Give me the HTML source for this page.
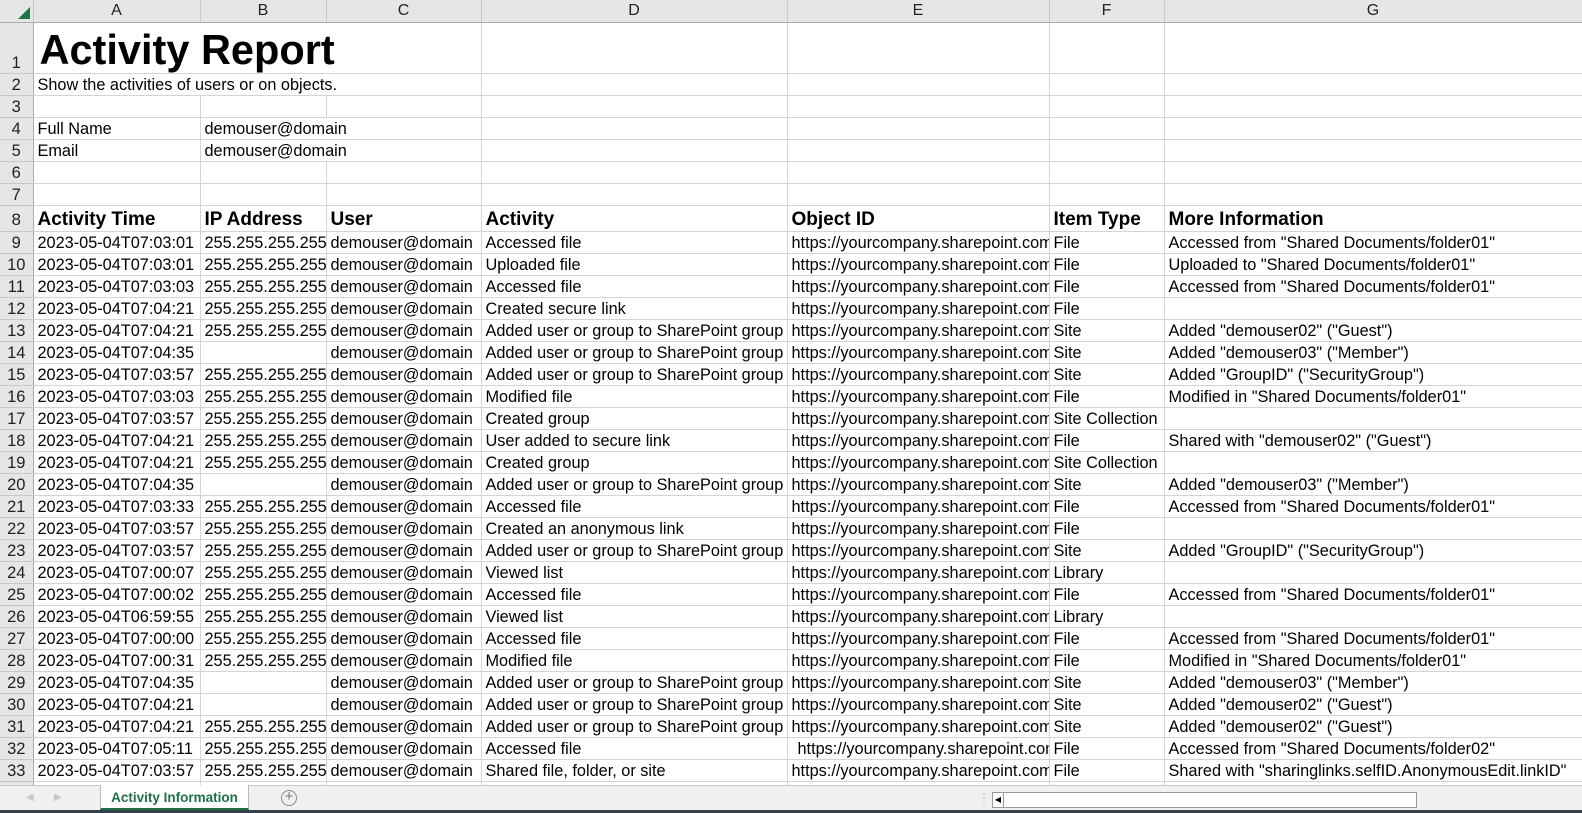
<!DOCTYPE html>
<html><head><meta charset="utf-8"><style>
*{margin:0;padding:0;box-sizing:border-box}
body{width:1582px;height:813px;overflow:hidden;background:#fff;font-family:"Liberation Sans",Arial,sans-serif;position:relative}
table{border-collapse:collapse;table-layout:fixed;position:absolute;left:0;top:0;width:1582px}
td{border-right:1px solid #d4d4d4;border-bottom:1px solid #d4d4d4;font-size:16.3px;white-space:nowrap;overflow:hidden;padding:0 0 0 4px;vertical-align:bottom;height:22px;line-height:19px;color:#000}
td.ov{overflow:visible}
tr.h td{background:#e6e6e6;text-align:center;height:22px;border-bottom:1px solid #ababab;border-right:1px solid #c8c8c8;font-size:16px;color:#222;vertical-align:middle;padding:0}
td.rn{background:#e6e6e6;text-align:center;padding:0;border-right:1px solid #ababab;border-bottom:1px solid #c8c8c8;color:#222;font-size:16.5px}
tr.t td{height:51px}
tr.t td.big{font-size:41.5px;font-weight:bold;line-height:46px;padding-left:6px}
tr.b td{font-size:19px;font-weight:bold;line-height:22px;height:26px}
.bar{position:absolute;left:0;top:785px;width:1582px;height:25px;background:#f0f0f0;border-top:1px solid #c8c8c8}
.bot{position:absolute;left:0;top:810px;width:1582px;height:3px;background:#33404a}
.tab{position:absolute;left:100px;top:785px;width:149px;height:25px;background:#fff;border-left:1px solid #bbb;border-right:1px solid #bbb;border-bottom:2px solid #1e7145;color:#1e7145;font-weight:bold;font-size:13.5px;text-align:center;line-height:25px}
</style></head><body>
<table>
<colgroup><col style="width:33px"><col style="width:167px"><col style="width:126px"><col style="width:155px"><col style="width:306px"><col style="width:262px"><col style="width:115px"><col style="width:418px"></colgroup>
<tr class="h"><td style="position:relative"><div style="position:absolute;right:3px;bottom:3px;width:0;height:0;border-left:12px solid transparent;border-bottom:12px solid #217346"></div></td><td>A</td><td>B</td><td>C</td><td>D</td><td>E</td><td>F</td><td>G</td></tr>
<tr class="t"><td class="rn">1</td><td class="ov big" style="border-right:none">Activity Report</td><td style="border-right:none"></td><td></td><td></td><td></td><td></td><td></td></tr>
<tr><td class="rn">2</td><td class="ov" style="border-right:none">Show the activities of users or on objects.</td><td style="border-right:none"></td><td></td><td></td><td></td><td></td><td></td></tr>
<tr><td class="rn">3</td><td></td><td></td><td></td><td></td><td></td><td></td><td></td></tr>
<tr><td class="rn">4</td><td>Full Name</td><td class="ov" style="border-right:none">demouser@domain</td><td></td><td></td><td></td><td></td><td></td></tr>
<tr><td class="rn">5</td><td>Email</td><td class="ov" style="border-right:none">demouser@domain</td><td></td><td></td><td></td><td></td><td></td></tr>
<tr><td class="rn">6</td><td></td><td></td><td></td><td></td><td></td><td></td><td></td></tr>
<tr><td class="rn">7</td><td></td><td></td><td></td><td></td><td></td><td></td><td></td></tr>
<tr class="b"><td class="rn" style="font-weight:normal;font-size:17px">8</td><td>Activity Time</td><td>IP Address</td><td>User</td><td>Activity</td><td>Object ID</td><td>Item Type</td><td>More Information</td></tr>
<tr><td class="rn">9</td><td>2023-05-04T07:03:01</td><td>255.255.255.255</td><td>demouser@domain</td><td>Accessed file</td><td>https://yourcompany.sharepoint.com</td><td>File</td><td>Accessed from "Shared Documents/folder01"</td></tr>
<tr><td class="rn">10</td><td>2023-05-04T07:03:01</td><td>255.255.255.255</td><td>demouser@domain</td><td>Uploaded file</td><td>https://yourcompany.sharepoint.com</td><td>File</td><td>Uploaded to "Shared Documents/folder01"</td></tr>
<tr><td class="rn">11</td><td>2023-05-04T07:03:03</td><td>255.255.255.255</td><td>demouser@domain</td><td>Accessed file</td><td>https://yourcompany.sharepoint.com</td><td>File</td><td>Accessed from "Shared Documents/folder01"</td></tr>
<tr><td class="rn">12</td><td>2023-05-04T07:04:21</td><td>255.255.255.255</td><td>demouser@domain</td><td>Created secure link</td><td>https://yourcompany.sharepoint.com</td><td>File</td><td></td></tr>
<tr><td class="rn">13</td><td>2023-05-04T07:04:21</td><td>255.255.255.255</td><td>demouser@domain</td><td>Added user or group to SharePoint group</td><td>https://yourcompany.sharepoint.com</td><td>Site</td><td>Added "demouser02" ("Guest")</td></tr>
<tr><td class="rn">14</td><td>2023-05-04T07:04:35</td><td></td><td>demouser@domain</td><td>Added user or group to SharePoint group</td><td>https://yourcompany.sharepoint.com</td><td>Site</td><td>Added "demouser03" ("Member")</td></tr>
<tr><td class="rn">15</td><td>2023-05-04T07:03:57</td><td>255.255.255.255</td><td>demouser@domain</td><td>Added user or group to SharePoint group</td><td>https://yourcompany.sharepoint.com</td><td>Site</td><td>Added "GroupID" ("SecurityGroup")</td></tr>
<tr><td class="rn">16</td><td>2023-05-04T07:03:03</td><td>255.255.255.255</td><td>demouser@domain</td><td>Modified file</td><td>https://yourcompany.sharepoint.com</td><td>File</td><td>Modified in "Shared Documents/folder01"</td></tr>
<tr><td class="rn">17</td><td>2023-05-04T07:03:57</td><td>255.255.255.255</td><td>demouser@domain</td><td>Created group</td><td>https://yourcompany.sharepoint.com</td><td>Site Collection</td><td></td></tr>
<tr><td class="rn">18</td><td>2023-05-04T07:04:21</td><td>255.255.255.255</td><td>demouser@domain</td><td>User added to secure link</td><td>https://yourcompany.sharepoint.com</td><td>File</td><td>Shared with "demouser02" ("Guest")</td></tr>
<tr><td class="rn">19</td><td>2023-05-04T07:04:21</td><td>255.255.255.255</td><td>demouser@domain</td><td>Created group</td><td>https://yourcompany.sharepoint.com</td><td>Site Collection</td><td></td></tr>
<tr><td class="rn">20</td><td>2023-05-04T07:04:35</td><td></td><td>demouser@domain</td><td>Added user or group to SharePoint group</td><td>https://yourcompany.sharepoint.com</td><td>Site</td><td>Added "demouser03" ("Member")</td></tr>
<tr><td class="rn">21</td><td>2023-05-04T07:03:33</td><td>255.255.255.255</td><td>demouser@domain</td><td>Accessed file</td><td>https://yourcompany.sharepoint.com</td><td>File</td><td>Accessed from "Shared Documents/folder01"</td></tr>
<tr><td class="rn">22</td><td>2023-05-04T07:03:57</td><td>255.255.255.255</td><td>demouser@domain</td><td>Created an anonymous link</td><td>https://yourcompany.sharepoint.com</td><td>File</td><td></td></tr>
<tr><td class="rn">23</td><td>2023-05-04T07:03:57</td><td>255.255.255.255</td><td>demouser@domain</td><td>Added user or group to SharePoint group</td><td>https://yourcompany.sharepoint.com</td><td>Site</td><td>Added "GroupID" ("SecurityGroup")</td></tr>
<tr><td class="rn">24</td><td>2023-05-04T07:00:07</td><td>255.255.255.255</td><td>demouser@domain</td><td>Viewed list</td><td>https://yourcompany.sharepoint.com</td><td>Library</td><td></td></tr>
<tr><td class="rn">25</td><td>2023-05-04T07:00:02</td><td>255.255.255.255</td><td>demouser@domain</td><td>Accessed file</td><td>https://yourcompany.sharepoint.com</td><td>File</td><td>Accessed from "Shared Documents/folder01"</td></tr>
<tr><td class="rn">26</td><td>2023-05-04T06:59:55</td><td>255.255.255.255</td><td>demouser@domain</td><td>Viewed list</td><td>https://yourcompany.sharepoint.com</td><td>Library</td><td></td></tr>
<tr><td class="rn">27</td><td>2023-05-04T07:00:00</td><td>255.255.255.255</td><td>demouser@domain</td><td>Accessed file</td><td>https://yourcompany.sharepoint.com</td><td>File</td><td>Accessed from "Shared Documents/folder01"</td></tr>
<tr><td class="rn">28</td><td>2023-05-04T07:00:31</td><td>255.255.255.255</td><td>demouser@domain</td><td>Modified file</td><td>https://yourcompany.sharepoint.com</td><td>File</td><td>Modified in "Shared Documents/folder01"</td></tr>
<tr><td class="rn">29</td><td>2023-05-04T07:04:35</td><td></td><td>demouser@domain</td><td>Added user or group to SharePoint group</td><td>https://yourcompany.sharepoint.com</td><td>Site</td><td>Added "demouser03" ("Member")</td></tr>
<tr><td class="rn">30</td><td>2023-05-04T07:04:21</td><td></td><td>demouser@domain</td><td>Added user or group to SharePoint group</td><td>https://yourcompany.sharepoint.com</td><td>Site</td><td>Added "demouser02" ("Guest")</td></tr>
<tr><td class="rn">31</td><td>2023-05-04T07:04:21</td><td>255.255.255.255</td><td>demouser@domain</td><td>Added user or group to SharePoint group</td><td>https://yourcompany.sharepoint.com</td><td>Site</td><td>Added "demouser02" ("Guest")</td></tr>
<tr><td class="rn">32</td><td>2023-05-04T07:05:11</td><td>255.255.255.255</td><td>demouser@domain</td><td>Accessed file</td><td style="padding-left:10px">https://yourcompany.sharepoint.com</td><td>File</td><td>Accessed from "Shared Documents/folder02"</td></tr>
<tr><td class="rn">33</td><td>2023-05-04T07:03:57</td><td>255.255.255.255</td><td>demouser@domain</td><td>Shared file, folder, or site</td><td>https://yourcompany.sharepoint.com</td><td>File</td><td>Shared with "sharinglinks.selfID.AnonymousEdit.linkID"</td></tr>
<tr><td class="rn"></td><td></td><td></td><td></td><td></td><td></td><td></td><td></td></tr>
</table>
<div class="bar">
<span style="position:absolute;left:26px;top:6px;color:#c8c8c8;font-size:10px">◀</span>
<span style="position:absolute;left:54px;top:6px;color:#c8c8c8;font-size:10px">▶</span>
<span style="position:absolute;left:281px;top:4px;width:16px;height:16px;border:1.5px solid #888;border-radius:50%;color:#777;font-size:15px;line-height:12px;text-align:center">+</span>
<span style="position:absolute;left:978px;top:5px;color:#bbb;font-size:12px">⋮</span>
<div style="position:absolute;left:992px;top:6px;width:425px;height:16px;background:#fff;border:1px solid #999"><div style="width:11px;height:14px;border-right:1px solid #999;font-size:8px;line-height:14px;text-align:center">◀</div></div>
</div>
<div class="tab">Activity Information</div>
<div class="bot"></div>
</body></html>
